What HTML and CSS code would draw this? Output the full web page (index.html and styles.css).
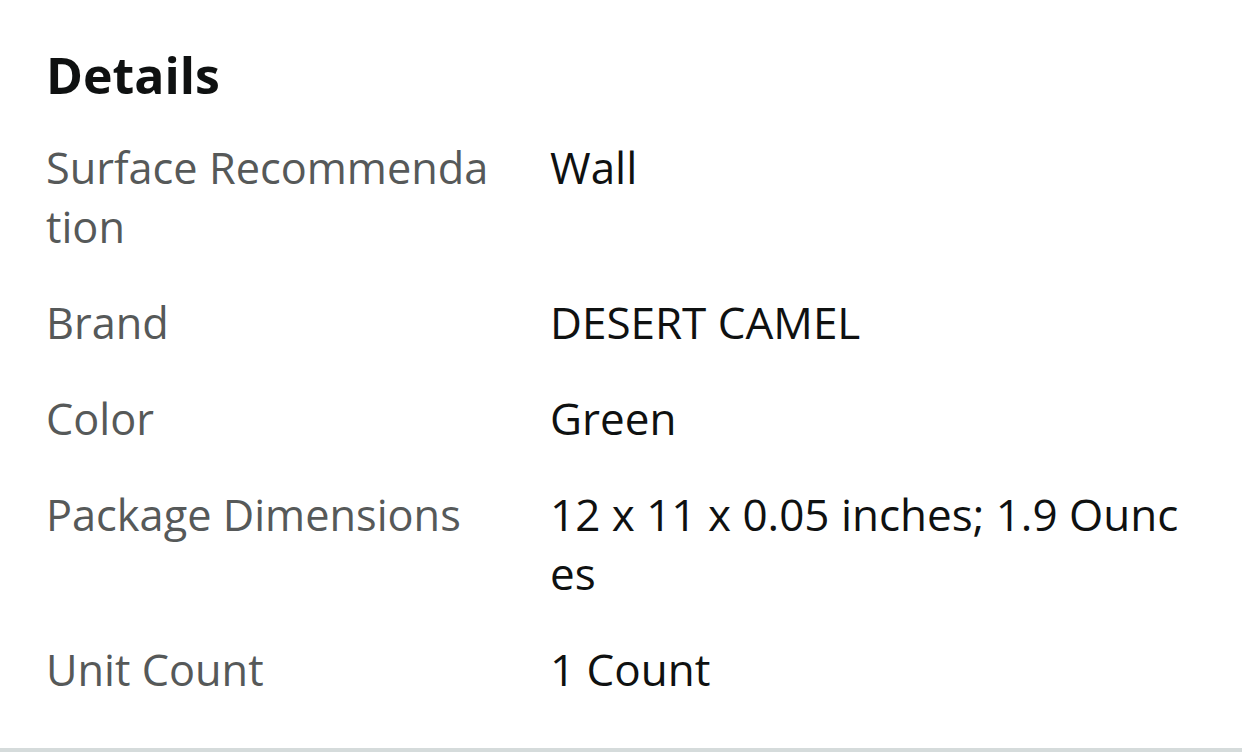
FILE: index.html
```html
<!DOCTYPE html>
<html>
<head>
<meta charset="utf-8">
<link rel="stylesheet" href="styles.css">
</head>
<body>
<div class="page">
  <section class="details">
    <h2 class="title">Details</h2>
    <div class="table">
      <div class="row"><div class="label">Surface Recommendation</div><div class="value">Wall</div></div>
      <div class="row"><div class="label">Brand</div><div class="value">DESERT CAMEL</div></div>
      <div class="row"><div class="label">Color</div><div class="value">Green</div></div>
      <div class="row"><div class="label">Package Dimensions</div><div class="value">12 x 11 x 0.05 inches; 1.9 Ounces</div></div>
      <div class="row"><div class="label">Unit Count</div><div class="value">1 Count</div></div>
    </div>
  </section>
  <div class="footer-strip"></div>
</div>
</body>
</html>
```
FILE: styles.css
```css
html, body {
  margin: 0;
  padding: 0;
  background: #ffffff;
}
body {
  font-family: "Open Sans", "Noto Sans", sans-serif;
  width: 1242px;
  height: 752px;
  overflow: hidden;
}
.page {
  display: flex;
  flex-direction: column;
  height: 752px;
}
.details {
  flex: 1;
  padding: 45px 46px 0 46px;
}
.title {
  margin: 0 0 14px 0;
  font-size: 50px;
  line-height: 60px;
  font-weight: 700;
  color: #0f1111;
}
.table {
  display: flex;
  flex-direction: column;
}
.row {
  display: flex;
  padding: 18.5px 0;
  font-size: 44px;
  line-height: 59px;
}
.label {
  width: 450px;
  flex: none;
  margin-right: 54px;
  font-size: 43.3px;
  color: #565959;
  word-break: break-all;
}
.value {
  flex: 1;
  color: #0f1111;
  word-break: break-all;
}
.footer-strip {
  height: 4px;
  background: #d5dbdb;
  flex: none;
}
```
